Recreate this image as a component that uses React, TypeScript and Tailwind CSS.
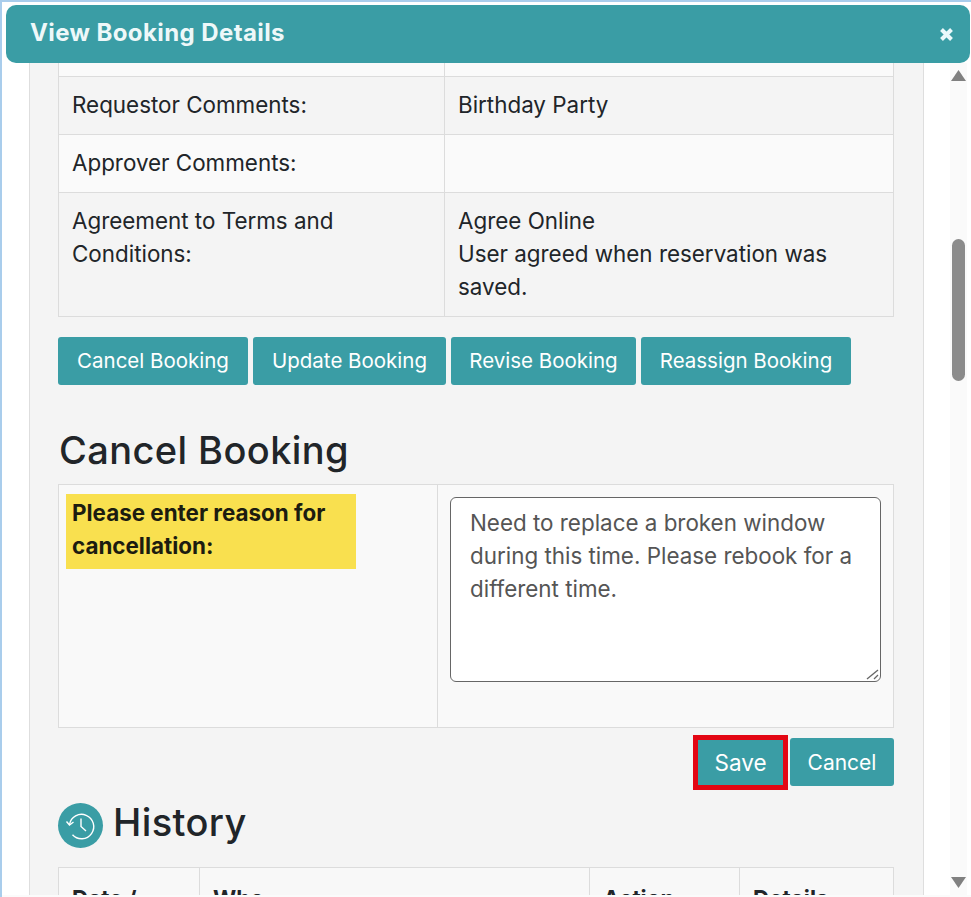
import React from "react";

const Btn = ({ children, w, size = "text-[20.5px]" }: { children: React.ReactNode; w: string; size?: string }) => (
  <button className={`h-12 ${w} ${size} bg-[#3a9da5] text-white rounded-[3px] flex items-center justify-center`}>{children}</button>
);

export default function App() {
  return (
    <div className="h-[897px] w-[971px] overflow-hidden bg-white border-l-[2px] border-t-[2px] border-[#a9cdec] flex flex-col font-['Inter',sans-serif] text-[#212529]">
      <header className="ml-[4px] mt-[3px] mr-[1px] h-[58px] shrink-0 rounded-[10px] bg-[#3a9da5] flex items-center justify-between pl-[24px] pr-[16px] text-white">
        <span className="text-[24px] leading-[32px] tracking-[0.4px] font-bold text-[#eef8f9] mb-[2px]">View Booking Details</span>
        <svg width="15" height="15" viewBox="0 0 15 15" className="mt-[1px]"><path d="M2.5 2.5L12.5 12.5M12.5 2.5L2.5 12.5" stroke="#eaf9fb" strokeWidth="4" /></svg>
      </header>
      <div className="flex flex-1 min-h-0">
        <div className="ml-[27px] w-[895px] bg-[#f4f4f4] border-x border-[#dedede] pl-[28px] pr-[29px] overflow-hidden text-[22.4px] leading-[33px]">
          <table className="w-[836px] table-fixed border-collapse">
            <colgroup><col className="w-[386px]" /><col /></colgroup>
            <tbody>
              <tr className="h-[13px] bg-[#fafafa]"><td className="border border-t-0 border-[#dcdcdc] p-0"></td><td className="border border-t-0 border-[#dcdcdc] p-0"></td></tr>
              <tr className="h-[58px] bg-[#f4f4f4]"><td className="border border-[#dcdcdc] px-[13px] pb-[2px]">Requestor Comments:</td><td className="border border-[#dcdcdc] px-[13px] pb-[2px]">Birthday Party</td></tr>
              <tr className="h-[58px] bg-[#fafafa]"><td className="border border-[#dcdcdc] px-[13px] pb-[2px]">Approver Comments:</td><td className="border border-[#dcdcdc] px-[13px]"></td></tr>
              <tr className="h-[124px] bg-[#f4f4f4]">
                <td className="border border-[#dcdcdc] px-[13px] align-top pt-[11px]">Agreement to Terms and Conditions:</td>
                <td className="border border-[#dcdcdc] px-[13px] align-top pt-[11px]">Agree Online<br />User agreed when reservation was saved.</td>
              </tr>
            </tbody>
          </table>
          <div className="flex gap-[5px] mt-[20px]">
            <Btn w="w-[190px]">Cancel Booking</Btn>
            <Btn w="w-[193px]">Update Booking</Btn>
            <Btn w="w-[185px]">Revise Booking</Btn>
            <Btn w="w-[210px]">Reassign Booking</Btn>
          </div>
          <h2 className="mt-[41px] ml-[1px] text-[38px] tracking-[0.4px] leading-[48px] font-medium text-[#212529]">Cancel Booking</h2>
          <div className="mt-[10px] w-[836px] h-[244px] border border-[#dcdcdc] bg-[#f9f9f9] flex">
            <div className="w-[379px] border-r border-[#dcdcdc] pl-[7px] pt-[9px]">
              <div className="w-[290px] h-[75px] bg-[#f9e04f] pl-[6px] pt-[2px] font-bold text-[#1c1c10]">Please enter reason for cancellation:</div>
            </div>
            <div className="pl-[12px] pt-[12px]">
              <div className="relative w-[431px] h-[185px]">
                <textarea
                  readOnly
                  className="w-full h-full block bg-white border border-[#666] rounded-[6px] px-[19px] pt-[8px] text-[#555] outline-none resize-none"
                  value="Need to replace a broken window during this time. Please rebook for a different time."
                />
                <svg width="13" height="13" viewBox="0 0 13 13" className="absolute right-[2px] bottom-[2px]" fill="none" stroke="#666" strokeWidth="1.3">
                  <path d="M1 12L12 3" />
                  <path d="M8 12L12 8" />
                </svg>
              </div>
            </div>
          </div>
          <div className="flex justify-end gap-[2px] mt-[7px] items-center w-[836px]">
            <button className="w-[95px] h-[55px] bg-[#3a9da5] border-[5px] border-[#e30613] text-white text-[22.5px] flex items-center justify-center">Save</button>
            <Btn w="w-[104px]" size="text-[21px]">Cancel</Btn>
          </div>
          <div className="flex items-center gap-[10px] mt-[12px]">
            <div className="w-[45px] h-[45px] rounded-full bg-[#3a9da5] flex items-center justify-center">
              <svg width="32" height="32" viewBox="0 0 32 32" fill="none" stroke="#fff" strokeWidth="1.4">
                <path d="M4.5 14.5A12.2 12.2 0 1 1 7.5 24.8" />
                <path d="M1.5 11.5L4.5 15L8.5 12" />
                <path d="M16 8.5V16.5L21 21" />
              </svg>
            </div>
            <h2 className="text-[38px] tracking-[0.4px] leading-[40px] mb-[8px] font-medium text-[#212529]">History</h2>
          </div>
          <div className="mt-[17px] w-[836px] h-[40px] border border-[#dcdcdc] border-b-0 bg-[#f8f8f8] flex font-bold overflow-hidden">
            <div className="w-[141px] border-r border-[#dcdcdc] px-[13px] pt-[14px]">Date /</div>
            <div className="w-[390px] border-r border-[#dcdcdc] px-[13px] pt-[14px]">Who</div>
            <div className="w-[150px] border-r border-[#dcdcdc] px-[13px] pt-[14px]">Action</div>
            <div className="px-[13px] pt-[14px]">Details</div>
          </div>
        </div>
        <div className="flex-1 bg-white flex justify-end">
          <div className="w-[17px] mr-[4px] bg-[#fafafa] flex flex-col items-center">
            <svg width="15" height="11" viewBox="0 0 15 11" className="mt-[7px] shrink-0"><path d="M7.5 0L15 11H0Z" fill="#808080" /></svg>
            <div className="w-[13px] h-[142px] shrink-0 bg-[#8b8b8b] rounded-[6.5px] mt-[158px]" />
            <svg width="15" height="11" viewBox="0 0 15 11" className="mt-[496px] shrink-0"><path d="M0 0H15L7.5 11Z" fill="#808080" /></svg>
          </div>
        </div>
      </div>
      <div className="h-[2px] shrink-0 bg-[#fbfbfb]" />
    </div>
  );
}
